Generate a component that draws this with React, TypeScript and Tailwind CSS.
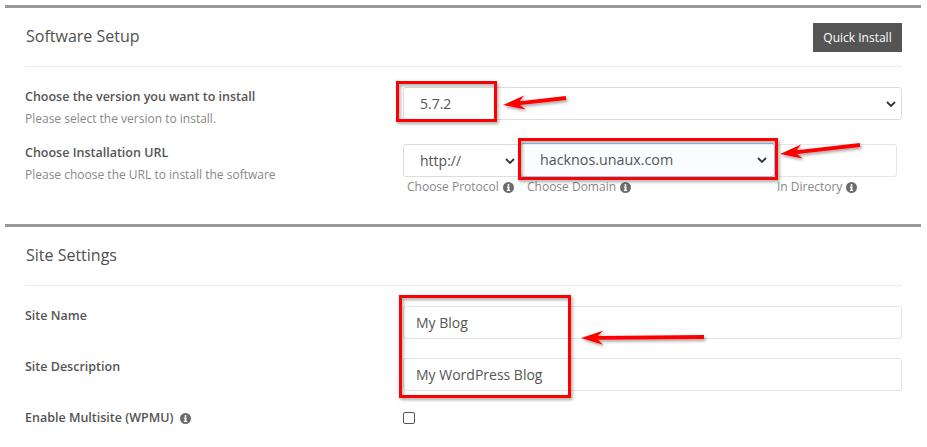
import React from "react";

function Info() {
  return (
    <svg width="11" height="11" viewBox="0 0 12 12" className="inline-block">
      <circle cx="6" cy="6" r="6" fill="#6b6b6b" />
      <circle cx="6" cy="3.2" r="1.1" fill="#fff" />
      <rect x="5" y="5" width="2" height="4.6" fill="#fff" />
      <rect x="4.2" y="5" width="2.8" height="1.1" fill="#fff" />
      <rect x="4.2" y="8.7" width="3.6" height="1.1" fill="#fff" />
    </svg>
  );
}

function Chevron() {
  return (
    <svg width="10" height="6" viewBox="0 0 10 6">
      <path d="M1 1 L5 5 L9 1" fill="none" stroke="#333" strokeWidth="1.8" />
    </svg>
  );
}

function Arrow({ x1, y1, x2, y2 }: { x1: number; y1: number; x2: number; y2: number }) {
  const dx = x2 - x1;
  const dy = y2 - y1;
  const len = Math.sqrt(dx * dx + dy * dy);
  const ux = dx / len;
  const uy = dy / len;
  const px = -uy;
  const py = ux;
  const hl = 22;
  const hw = 7;
  const bx = x1 + ux * hl;
  const by = y1 + uy * hl;
  const neck = 3;
  const nx = x1 + ux * (hl - 5);
  const ny = y1 + uy * (hl - 5);
  const pts = [
    [x1, y1],
    [bx + px * hw, by + py * hw],
    [nx + px * neck * 0.6, ny + py * neck * 0.6],
    [x2 + px * 2, y2 + py * 2],
    [x2 - px * 2, y2 - py * 2],
    [nx - px * neck * 0.6, ny - py * neck * 0.6],
    [bx - px * hw, by - py * hw],
  ]
    .map((p) => p.join(","))
    .join(" ");
  return <polygon points={pts} fill="#ff0000" filter="url(#sh)" />;
}

export default function App() {
  return (
    <div className="relative w-[927px] h-[447px] overflow-hidden bg-white font-['Open_Sans',sans-serif] text-[#555]">
      <div className="ml-[5px] w-[916px] pt-[5px]">
        {/* Software Setup */}
        <div className="border-t-[3px] border-[#999] pl-5 pr-[19px] pb-[29px]">
          <div className="h-[59px] border-b border-[#ebebeb] flex items-center justify-between">
            <div className="text-[16px] text-[#505050] pl-[1px] pb-[2px]">Software Setup</div>
            <button className="h-[29px] w-[89px] bg-[#555] text-white text-[12px] mt-[1px]">Quick Install</button>
          </div>
          <div className="flex mt-5">
            <div className="w-[378px]">
              <div className="text-[12.5px] font-semibold leading-[18px] pt-[1px] text-[#555]">Choose the version you want to install</div>
              <div className="text-[12px] leading-[18px] mt-[4px] text-[#888]">Please select the version to install.</div>
            </div>
            <div className="flex-1 h-[33px] border border-[#ddd] rounded-[3px] pl-4 pr-[5px] flex items-center justify-between text-[14px] text-[#555]">
              <span>5.7.2</span>
              <Chevron />
            </div>
          </div>
          <div className="flex mt-4">
            <div className="w-[378px]">
              <div className="text-[12.5px] font-semibold leading-[18px] text-[#555]">Choose Installation URL</div>
              <div className="text-[12px] leading-[18px] mt-[4px] text-[#888]">Please choose the URL to install the software</div>
            </div>
            <div className="flex-1 flex">
              <div className="w-[117px]">
                <div className="h-[33px] border border-[#ddd] rounded-[3px] pl-[16px] pr-[4px] flex items-center justify-between text-[14px] text-[#555]">
                  <span>http://</span>
                  <Chevron />
                </div>
                <div className="mt-[2px] pl-[4px] text-[12px] leading-[16px] text-[#888] flex items-center gap-[4px] whitespace-nowrap">
                  Choose Protocol <Info />
                </div>
              </div>
              <div className="w-[255px]">
                <div className="h-[34px] -mt-[1px] border border-[#9cc5ee] bg-[#fafcff] rounded-[3px] pl-[19px] pr-[7px] flex items-center justify-between text-[14.3px] text-[#555]">
                  <span>hacknos.unaux.com</span>
                  <Chevron />
                </div>
                <div className="mt-[2px] pl-[7px] text-[12px] leading-[16px] text-[#888] flex items-center gap-[4px] whitespace-nowrap">
                  Choose Domain <Info />
                </div>
              </div>
              <div className="w-[120px] ml-[2px]">
                <div className="h-[33px] border border-[#e5e5e5] rounded-[3px]"></div>
                <div className="mt-[2px] text-[12px] leading-[16px] text-[#888] flex items-center gap-[4px] whitespace-nowrap">
                  In Directory <Info />
                </div>
              </div>
            </div>
          </div>
        </div>

        {/* Site Settings */}
        <div className="border-t-[3px] border-[#999] pl-5 pr-[19px]">
          <div className="h-[59px] border-b border-[#ebebeb] flex items-center">
            <div className="text-[16px] text-[#505050] pl-[1px] pb-[3px]">Site Settings</div>
          </div>
          <div className="flex mt-5">
            <div className="w-[378px] text-[12.5px] font-semibold leading-[18px] text-[#555] pt-[1px]">Site Name</div>
            <div className="flex-1 h-[33px] border border-[#e3e3e3] rounded-[3px] pl-[12px] flex items-center text-[14px] text-[#555]">
              My Blog
            </div>
          </div>
          <div className="flex mt-[19px]">
            <div className="w-[378px] text-[12.5px] font-semibold leading-[18px] text-[#555]">Site Description</div>
            <div className="flex-1 h-[33px] border border-[#e3e3e3] rounded-[3px] pl-[12px] flex items-center text-[14px] text-[#555]">
              My WordPress Blog
            </div>
          </div>
          <div className="flex mt-[18px]">
            <div className="w-[378px] text-[12.5px] font-semibold leading-[18px] text-[#555] flex items-center gap-[7px]">
              Enable Multisite (WPMU) <Info />
            </div>
            <div className="flex-1">
              <div className="mt-[3px] w-[12px] h-[12px] border border-[#555] rounded-[2px] bg-white"></div>
            </div>
          </div>
        </div>
      </div>

      {/* annotation overlay */}
      <svg className="absolute left-0 top-0 pointer-events-none" width="927" height="447">
        <defs>
          <filter id="sh" x="-20%" y="-20%" width="140%" height="160%">
            <feDropShadow dx="1.5" dy="2" stdDeviation="1.5" floodColor="#000" floodOpacity="0.35" />
          </filter>
        </defs>
        <rect x="397.5" y="82.5" width="98" height="38" fill="none" stroke="#ff0000" strokeWidth="3" filter="url(#sh)" />
        <rect x="519.5" y="139.5" width="257" height="39" fill="none" stroke="#ff0000" strokeWidth="3" filter="url(#sh)" />
        <rect x="400.5" y="296.5" width="169" height="100" fill="none" stroke="#ff0000" strokeWidth="3" filter="url(#sh)" />
        <Arrow x1={503} y1={105} x2={566} y2={98} />
        <Arrow x1={780} y1={154} x2={860} y2={145} />
        <Arrow x1={581} y1={338} x2={704} y2={337} />
      </svg>
    </div>
  );
}
